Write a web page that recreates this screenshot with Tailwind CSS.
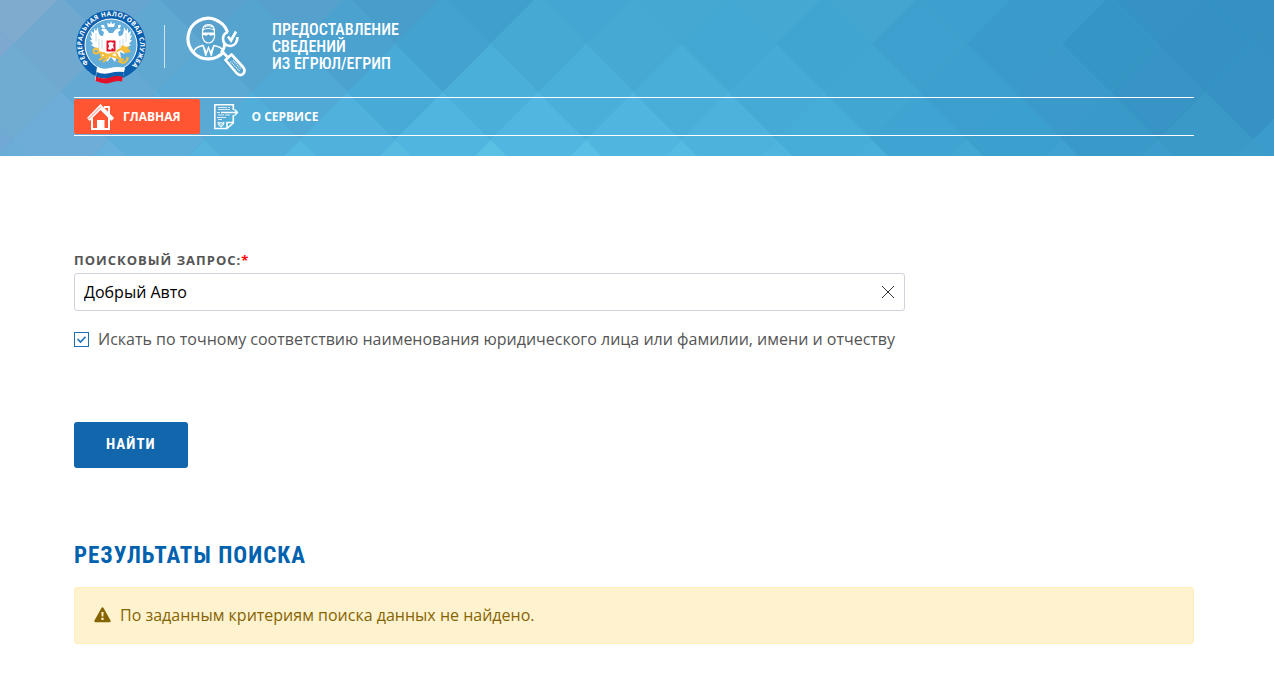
<!DOCTYPE html>
<html lang="ru">
<head>
  <meta charset="UTF-8" />
  <meta name="viewport" content="width=device-width, initial-scale=1.0" />
  <title>Предоставление сведений из ЕГРЮЛ/ЕГРИП</title>
  <script src="https://cdn.jsdelivr.net/npm/@tailwindcss/browser@4"></script>
</head>
<body class="bg-white text-base text-[#555] font-['Open_Sans','Noto_Sans',sans-serif]">

  <header class="relative overflow-hidden bg-[#45a9d4]">
    <!-- Фон из ромбов -->
    <svg id="diamonds" class="absolute left-0 top-0 h-full w-full" viewBox="0 0 1274 156" preserveAspectRatio="xMidYMin slice" aria-hidden="true"></svg>

    <div class="relative pl-[74px] pr-20 pt-2 pb-5">
      <a href="#" class="flex w-fit items-start text-white">
        <!-- Эмблема ФНС -->
        <svg class="h-[76px] w-[74px] overflow-visible" viewBox="74 8 74 76" role="img" aria-label="Федеральная налоговая служба">
          <defs>
            <path id="ring" d="M88.500 63.500 A29 29 0 1 1 124 71" />
          </defs>
          <circle cx="111" cy="45" r="34.800" fill="#0a5fae" />
          <circle cx="111" cy="45" r="26" fill="#63addb" stroke="#fff" stroke-width="1" />
          <text fill="#fff" font-family="Open Sans" font-size="6.500" font-weight="700" letter-spacing=".4"><textPath href="#ring">ФЕДЕРАЛЬНАЯ НАЛОГОВАЯ СЛУЖБА</textPath></text>
          <!-- орёл -->
          <g fill="#fff">
            <path d="M109 33 Q105 26 101 30 L104 32 L103 36 Q98 37 98 27 L96 31 L94 28 L94 33 L91 31 L92 36 L90 35 L92 40 L90 40 L93 44 L91 45 L96 48 L94 50 L99 50 L97 54 L102 52 L101 58 L105 56 L107 62 L111 57 L115 62 L117 56 L121 58 L120 52 L125 54 L123 50 L128 50 L126 48 L131 45 L129 44 L132 40 L130 40 L132 35 L130 36 L131 31 L128 33 L128 28 L126 31 L124 27 Q124 37 119 36 L118 32 L121 30 Q117 26 113 33 Z" />
            <path d="M108 27 L107 23 L110 24 L111 21 L112 24 L115 23 L114 27 Z" />
            <path d="M102 28 L101 25 L104 25 L105 28 Z M118 28 L118 25 L121 25 L120 28 Z" />
          </g>
          <path d="M96 33v9M99 39v10M102 40v9M126 33v9M123 39v10M120 40v9" stroke="#b9d4ea" stroke-width=".8" />
          <!-- ключ и кадуцей -->
          <g fill="none" stroke="#f5bd3c" stroke-width="2">
            <circle cx="96" cy="51" r="2.500" />
            <path d="M99 52 L124 60 M99 60 L125 47 M103 62 L109 57 M116 53 L122 63 M121 47 L130 51 M118 61 Q126 66 128 57" />
            <circle cx="103" cy="55" r="2" />
          </g>
          <path d="M122 45 l4 2 l3 -1 l-1 4 l3 2 l-6 1 l-4 -3z" fill="#f5bd3c" />
          <rect x="106" y="40" width="10" height="12" rx="1" fill="#e3122b" stroke="#fff" stroke-width="1" />
          <path d="M108 43l3-1 3 1-1 2 1 4-2-1-1 2-3-1 1-3z" fill="#fff" />
          <!-- флаг -->
          <path d="M97 67 Q103 70 110 68 T125 68 L122 81 Q117 79 111 81.500 T95 80.500 Z" fill="#fff" />
          <path d="M96.500 72 Q103 75 110 73 T124 72 L123 77 Q117 76 111 78 T96 77 Z" fill="#0a5fae" />
          <path d="M96 76.500 Q103 80 110 77.500 T123 77 L122 81.500 Q117 80 111 82.500 T95.500 81 Z" fill="#e3122b" />
        </svg>

        <span class="ml-4 mt-[17px] h-[43px] w-px bg-white/70"></span>

        <!-- Лупа с человеком и ключом -->
        <svg class="ml-5 mt-2 h-[62px] w-[62px]" viewBox="185 16 62 62" fill="none" stroke="#fff" aria-hidden="true">
          <path d="M227.500 32 A20.300 20.300 0 1 0 224 51.500" stroke-width="3.200" />
          <!-- голова -->
          <path d="M202.500 33 Q202 24.500 208.500 24.500 Q215 24.500 214.500 33 V37 Q213 43 208.500 43 Q204 43 202.500 37 Z" stroke-width="1.200" />
          <path d="M202.500 30 Q208 27 214.500 30 M204.500 27 Q208 24.500 212.500 27" stroke-width="1.200" />
          <path d="M202 32.500 h13 v2.300 l-4.500 1 l-2 -1.500 l-2 1.500 l-4.500 -1z" fill="#fff" stroke="none" />
          <!-- плечи -->
          <path d="M193.500 52 Q195 47 203 45.500 L206.500 53 L208.500 47.500 L210.500 53 L214 45.500 Q221 47 223 50 M203 45.500 L206 56 M214 45.500 L211 56" stroke-width="1.400" />
          <!-- гаечный ключ -->
          <path d="M228 32 Q223 33.500 223 39 Q223 45.500 230.500 46 Q237 45.500 237.500 37" stroke-width="2.600" />
          <path d="M228 36.500 L231 40.500 L236 31.500" stroke-width="2.600" />
          <path d="M224.500 43 Q225 48 222 51.500 L228 57.500" stroke-width="2.800" />
          <path d="M225.500 60 L231.500 54.500 L243 67 Q246 71 243 74 Q240 76.500 236.500 73 Z" stroke-width="2.600" stroke-linejoin="round" />
          <path d="M230.500 61.500 L240 71.500 M233 60.500 L241 69" stroke-width="1.200" stroke-dasharray="1 1" />
        </svg>

        <span class="ml-[25px] mt-[13px] font-['Roboto_Condensed','Roboto',sans-serif] text-base leading-[17px] font-medium">ПРЕДОСТАВЛЕНИЕ<br>СВЕДЕНИЙ<br>ИЗ ЕГРЮЛ/ЕГРИП</span>
      </a>

      <nav class="mt-[13px] flex border-y border-white py-px text-xs font-bold text-white">
        <a href="#" class="flex h-[35px] items-center rounded-xs bg-[#ff5533] pl-3 pr-5">
          <svg class="mr-[9px] h-7 w-7" viewBox="0 0 28 28" aria-hidden="true">
            <path d="M1 15 L14.500 1 L28 15 L25.500 18 L14.500 7 L3.500 18 Z" fill="#fff" />
            <path d="M2.500 16 L15 3.500" stroke="#ff5533" stroke-width=".7" />
            <path d="M18 4 h5 v7" fill="none" stroke="#fff" stroke-width="1.800" />
            <path d="M6 15 V26 H23 V15" fill="none" stroke="#fff" stroke-width="2" />
            <path d="M11 17 h7.500 v9 h-7.500z" fill="#fff" />
          </svg>
          ГЛАВНАЯ
        </a>
        <a href="#" class="flex h-[35px] items-center px-3">
          <svg class="mr-[11px] h-7 w-7" viewBox="0 0 28 28" fill="none" stroke="#fff" aria-hidden="true">
            <path d="M21.300 7 V1.800 H2.800 V25.500 H15 L21.300 20 V12" stroke-width="1.600" />
            <path d="M15 25 V19.500 H21" stroke-width="1.600" />
            <path d="M9 9.500 H25 M22.500 6.500 L25.500 9.500 L22.500 12.500" stroke-width="1.400" />
            <path d="M6 4.500 h9 M16 4.500 h2 M6 6.500 h12 M5 9.500 h3 M6 12 h6 M13 12 h5 M5 14.500 h9 M6 16.500 h4" stroke-width=".8" />
            <path d="M6 19 l2 1.200 1-1 1 1 2-1.200 -.5 3 -2.500 2 -2.500-2z" fill="#fff" fill-opacity=".5" stroke-width=".9" />
          </svg>
          О СЕРВИСЕ
        </a>
      </nav>
    </div>
  </header>

  <main class="pl-[74px] pr-20 pb-9">
    <form class="pt-24" onsubmit="return false">
      <div class="w-3/4 pr-[9px]">
        <label for="query" class="block text-[13px] leading-[17px] font-bold tracking-[1px]">ПОИСКОВЫЙ ЗАПРОС:<span class="text-[#f00]">*</span></label>
        <div class="relative mt-1">
          <input id="query" type="text" value="Добрый Авто" class="block h-[38px] w-full rounded-[3px] border border-[#ced4da] bg-white pl-[9px] pr-10 text-black outline-none" />
          <button type="button" id="clear" aria-label="Очистить" class="absolute right-2.5 top-3">
            <svg class="h-3.5 w-3.5" viewBox="0 0 14 14" stroke="#333" stroke-width="1"><path d="M1 1 L13 13 M13 1 L1 13" /></svg>
          </button>
        </div>
      </div>

      <label class="relative mt-4 flex items-center gap-[9px]">
        <input type="checkbox" checked class="peer h-[15px] w-[15px] shrink-0 appearance-none border border-[#1d70b7] bg-white" />
        <svg class="absolute left-0 hidden h-[15px] w-[15px] peer-checked:block" viewBox="0 0 15 15" fill="none" stroke="#1d70b7" stroke-width="1.600"><path d="M3.500 7 L6.500 10 L11.500 4.800" /></svg>
        Искать по точному соответствию наименования юридического лица или фамилии, имени и отчеству
      </label>

      <button type="submit" class="mt-[71px] block h-[46px] rounded-[3px] bg-[#1266ab] px-8 pb-0.5 font-['Roboto_Condensed','Roboto',sans-serif] text-[15px] font-bold tracking-[1px] text-white">НАЙТИ</button>
    </form>

    <h2 class="mt-[72px] font-['Roboto_Condensed','Roboto',sans-serif] text-[23px] leading-8 font-bold tracking-[1px] text-[#0062ae]">РЕЗУЛЬТАТЫ ПОИСКА</h2>

    <div role="alert" class="mt-[15px] flex items-center gap-[9px] rounded-[3px] border border-[#ffeeba] bg-[#fff2ce] px-[19px] pt-[15px] pb-4 text-[#856404]">
      <svg class="h-4 w-[17px]" viewBox="0 0 17 16" aria-hidden="true">
        <path d="M8.500 1.500 L15.500 14 H1.500 Z" fill="#856404" stroke="#856404" stroke-width="2.400" stroke-linejoin="round" />
        <path d="M7.400 5 h2.200 l-.3 4.500 h-1.600z M7.400 10.800 h2.200 v2.200 h-2.200z" fill="#fff2ce" />
      </svg>
      По заданным критериям поиска данных не найдено.
    </div>
  </main>

  <script>
    // Цвета ромбов по рядам, слева направо
    const ROWS = [
      { x: 14, y: -4, colors: ['#7fabcf', '#66a5cf', '#5aa2cd', '#55a0cc', '#489dcb', '#419fcd', '#44a6d2', '#44a8d2', '#44a8d2', '#43a5d0', '#3d9fcd', '#3a9aca', '#3592c3', '#3591c1'] },
      { x: -34, y: 44, colors: ['#7fa8d0', '#70a9d0', '#5fa8d2', '#55a4d0', '#4ba2cf', '#44a2d0', '#46a9d4', '#45a9d4', '#43a8d3', '#41a5d1', '#3da0ce', '#3a9bca', '#3595c5', '#3491c1', '#3591c2'] },
      { x: 14, y: 92, colors: ['#70abd2', '#64a9d4', '#5aa9d4', '#50a8d5', '#48aad7', '#4aafd9', '#4aafd9', '#49afd9', '#45abd6', '#42a6d3', '#3c9fcd', '#3b9aca', '#3794c4', '#3692c3'] },
      { x: -34, y: 140, colors: ['#71a9d5', '#6dadd8', '#5eaeda', '#50aed9', '#4fb1dc', '#50b5df', '#51b6e0', '#50b6df', '#4db3dd', '#46acd8', '#40a4d2', '#3ba0ce', '#3999c8', '#3a99c7', '#3b9bca'] },
      { x: 14, y: 188, colors: ['#6cadd8', '#66b2dc', '#57b4dc', '#54b8e0', '#57bae0', '#5ac0e4', '#59bfe4', '#55bbe2', '#4fb5de', '#48afda', '#43a7d4', '#3fa1cf', '#3d9ccb', '#3d9bca'] }
    ];
    const STEP = 95.33;
    const HALF = 48;
    const svg = document.getElementById('diamonds');

    ROWS.forEach(row => {
      row.colors.forEach((color, i) => {
        const cx = row.x + i * STEP;
        const p = document.createElementNS('http://www.w3.org/2000/svg', 'path');
        p.setAttribute('d', `M${cx} ${row.y - HALF} l${HALF} ${HALF} l-${HALF} ${HALF} l-${HALF} -${HALF}z`);
        p.setAttribute('fill', color);
        svg.appendChild(p);
      });
    });

    document.getElementById('clear').addEventListener('click', () => {
      document.getElementById('query').value = '';
    });
  </script>
</body>
</html>
